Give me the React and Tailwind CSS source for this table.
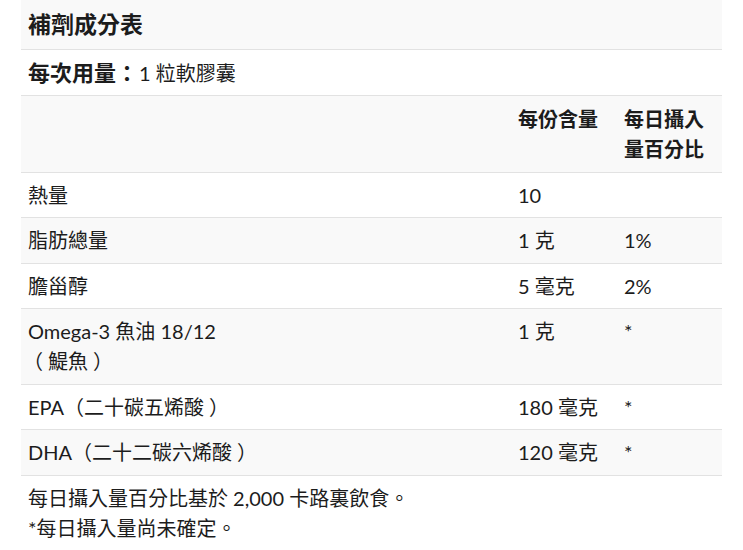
import React from "react";

const O = ({ c }) => (
  <span className="inline-block -translate-x-[5px]">{c}</span>
);
const C = ({ c }) => (
  <span className="inline-block translate-x-[5px]">{c}</span>
);

const rows = [
  { name: "熱量", amt: "10", dv: "" },
  { name: "脂肪總量", amt: "1 克", dv: "1%" },
  { name: "膽甾醇", amt: "5 毫克", dv: "2%" },
  {
    name: (
      <>
        Omega-3 魚油 18/12
        <br />
        <O c="（" />鯷魚<C c="）" />
      </>
    ),
    amt: "1 克",
    dv: "*",
  },
  {
    name: (
      <>
        EPA（二十碳五烯酸<C c="）" />
      </>
    ),
    amt: "180 毫克",
    dv: "*",
  },
  {
    name: (
      <>
        DHA（二十二碳六烯酸<C c="）" />
      </>
    ),
    amt: "120 毫克",
    dv: "*",
  },
];

export default function App() {
  return (
    <div
      lang="zh-TW"
      className="bg-white px-[21px] text-[20px] leading-[30.4px] text-[#1c1c1c]"
      style={{ fontFamily: "Lato, 'Noto Sans CJK TC', sans-serif" }}
    >
      <div className="bg-[#f9f9f9] border-b border-[#e2e2e2] px-[7px] py-[7px] text-[23px] leading-[35px] font-bold">
        補劑成分表
      </div>
      <div className="flex h-[46px] items-center bg-white border-b border-[#e2e2e2] px-[7px] leading-[30px]">
        <span className="font-bold text-[22px]">每次用量：</span>
        <span className="ml-[1px]">1 粒軟膠囊</span>
      </div>
      <div className="grid grid-cols-[1fr_106px_105px] bg-[#f9f9f9] border-b border-[#e2e2e2] font-bold">
        <div className="px-[7px] py-[7.5px]"></div>
        <div className="px-[7px] py-[7.5px]">每份含量</div>
        <div className="px-[7px] py-[7.5px]">每日攝入量百分比</div>
      </div>
      {rows.map((r, i) => (
        <div
          key={i}
          className={
            "grid grid-cols-[1fr_106px_105px] border-b border-[#e2e2e2] " +
            (i % 2 === 0 ? "bg-white" : "bg-[#f9f9f9]")
          }
        >
          <div className="px-[7px] py-[7px]">{r.name}</div>
          <div className="px-[7px] py-[7px]">{r.amt}</div>
          <div className="px-[7px] py-[7px]">{r.dv}</div>
        </div>
      ))}
      <div className="px-[7px] pt-[7px] leading-[30px]">
        <p>每日攝入量百分比基於 2,000 卡路裏飲食。</p>
        <p>*每日攝入量尚未確定。</p>
      </div>
    </div>
  );
}
